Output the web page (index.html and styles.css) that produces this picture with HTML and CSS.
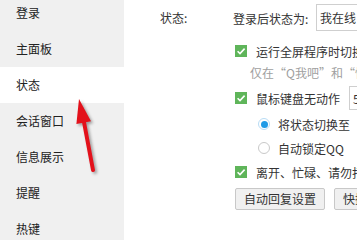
FILE: index.html
```html
<!DOCTYPE html>
<html lang="zh-CN">
<head>
<meta charset="utf-8">
<link rel="stylesheet" href="styles.css">
</head>
<body>
<div class="app">
  <nav class="side">
    <div class="item">登录</div>
    <div class="item">主面板</div>
    <div class="item active">状态</div>
    <div class="item">会话窗口</div>
    <div class="item">信息展示</div>
    <div class="item">提醒</div>
    <div class="item">热键</div>
  </nav>
  <main class="main">
    <div class="section-label">状态:</div>
    <div class="settings">
      <div class="row r1">
        <span class="lbl">登录后状态为:</span>
        <span class="box box-wide">我在线</span>
      </div>
      <div class="row r2">
        <span class="check"><svg viewBox="0 0 12 12" width="12" height="12"><path d="M2.6 6.2 L5 8.6 L9.6 3.6" fill="none" stroke="#fff" stroke-width="1.6"/></svg></span>
        <span class="ctext">运行全屏程序时切换为请勿打扰</span>
      </div>
      <div class="row r3">
        <span class="note">仅在“Q我吧”和“忙碌”状态下有效</span>
      </div>
      <div class="row r4">
        <span class="check"><svg viewBox="0 0 12 12" width="12" height="12"><path d="M2.6 6.2 L5 8.6 L9.6 3.6" fill="none" stroke="#fff" stroke-width="1.6"/></svg></span>
        <span class="ctext idle">鼠标键盘无动作</span>
        <span class="box box-num">5</span>
      </div>
      <div class="row r5">
        <span class="radio on"></span>
        <span class="rtext">将状态切换至</span>
      </div>
      <div class="row r6">
        <span class="radio"></span>
        <span class="rtext">自动锁定QQ</span>
      </div>
      <div class="row r7">
        <span class="check"><svg viewBox="0 0 12 12" width="12" height="12"><path d="M2.6 6.2 L5 8.6 L9.6 3.6" fill="none" stroke="#fff" stroke-width="1.6"/></svg></span>
        <span class="ctext">离开、忙碌、请勿打扰时自动回复</span>
      </div>
      <div class="row r8">
        <button class="btn">自动回复设置</button>
        <button class="btn">快捷回复设置</button>
      </div>
    </div>
  </main>
  <svg class="arrow" viewBox="0 0 35 90" width="35" height="90">
    <line x1="13.6" y1="30" x2="23" y2="80" stroke="#e3111b" stroke-width="4" stroke-linecap="round"/>
    <polygon points="9,9 21,31.2 6.4,34" fill="#e3111b"/>
  </svg>
</div>
</body>
</html>
```

FILE: styles.css
```css
* { box-sizing: border-box; }
html, body {
  margin: 0;
  padding: 0;
  width: 357px;
  height: 240px;
  overflow: hidden;
  background: #fff;
}
body {
  font-family: "Noto Sans CJK SC", "Microsoft YaHei", sans-serif;
  font-size: 12px;
  color: #333;
}
.app {
  position: relative;
  display: flex;
  width: 357px;
  height: 240px;
}
.side {
  width: 124px;
  flex: none;
  background: #f0f0f0;
  padding-top: 0;
}
.item {
  height: 36px;
  line-height: 36px;
  padding-left: 16px;
  color: #222;
  white-space: nowrap;
}
.item:first-child { margin-top: -5px; }
.item.active { background: #fff; }
.main {
  flex: 1;
  display: flex;
  padding-left: 36px;
  overflow: hidden;
  white-space: nowrap;
}
.section-label {
  width: 73px;
  flex: none;
  height: 36px;
  line-height: 36px;
  color: #333;
}
.settings {
  display: flex;
  flex-direction: column;
  flex: none;
}
.row {
  display: flex;
  align-items: center;
  height: 24px;
}
.r1 { height: 36px; }
.r2 { margin-top: 3px; }
.r3 { height: 18px; }
.r4 { margin-top: 5px; }
.r5 { margin-top: 2px; }
.r8 { margin-top: 4px; height: 22px; }
.lbl {
  width: 83px;
  flex: none;
}
.box {
  border: 1px solid #cfcfcf;
  background: #fff;
  color: #333;
  display: flex;
  align-items: center;
  padding-left: 3px;
}
.box-wide {
  width: 60px;
  height: 27px;
  margin-top: -1px;
}
.box-num {
  width: 30px;
  height: 24px;
  margin-left: 9px;
}
.check {
  width: 12px;
  height: 12px;
  flex: none;
  background: #5fb55a;
  margin-left: 2px;
  display: flex;
}
.ctext { margin-left: 9px; }
.note {
  margin-left: 17px;
  color: #a0a0a0;
}
.radio {
  width: 12px;
  height: 12px;
  flex: none;
  border-radius: 50%;
  border: 1px solid #c9c9c9;
  background: #fff;
  margin-left: 25px;
  position: relative;
}
.radio.on {
  border-color: #b8dcf5;
}
.radio.on::after {
  content: "";
  position: absolute;
  left: 1.5px;
  top: 1.5px;
  width: 7px;
  height: 7px;
  border-radius: 50%;
  background: #1e9ae6;
}
.rtext { margin-left: 8px; }
.btn {
  font-family: inherit;
  font-size: 12px;
  color: #333;
  height: 22px;
  padding: 0 8px;
  border: 1px solid #c8c8c8;
  border-radius: 2px;
  background: #f0f0f0;
  margin: 0 9px 0 2px;
  flex: none;
  line-height: 20px;
}
.btn + .btn { margin-left: 0; }
.arrow {
  position: absolute;
  left: 70px;
  top: 90px;
  filter: drop-shadow(2px 2px 1.5px rgba(0,0,0,0.35));
}
```
